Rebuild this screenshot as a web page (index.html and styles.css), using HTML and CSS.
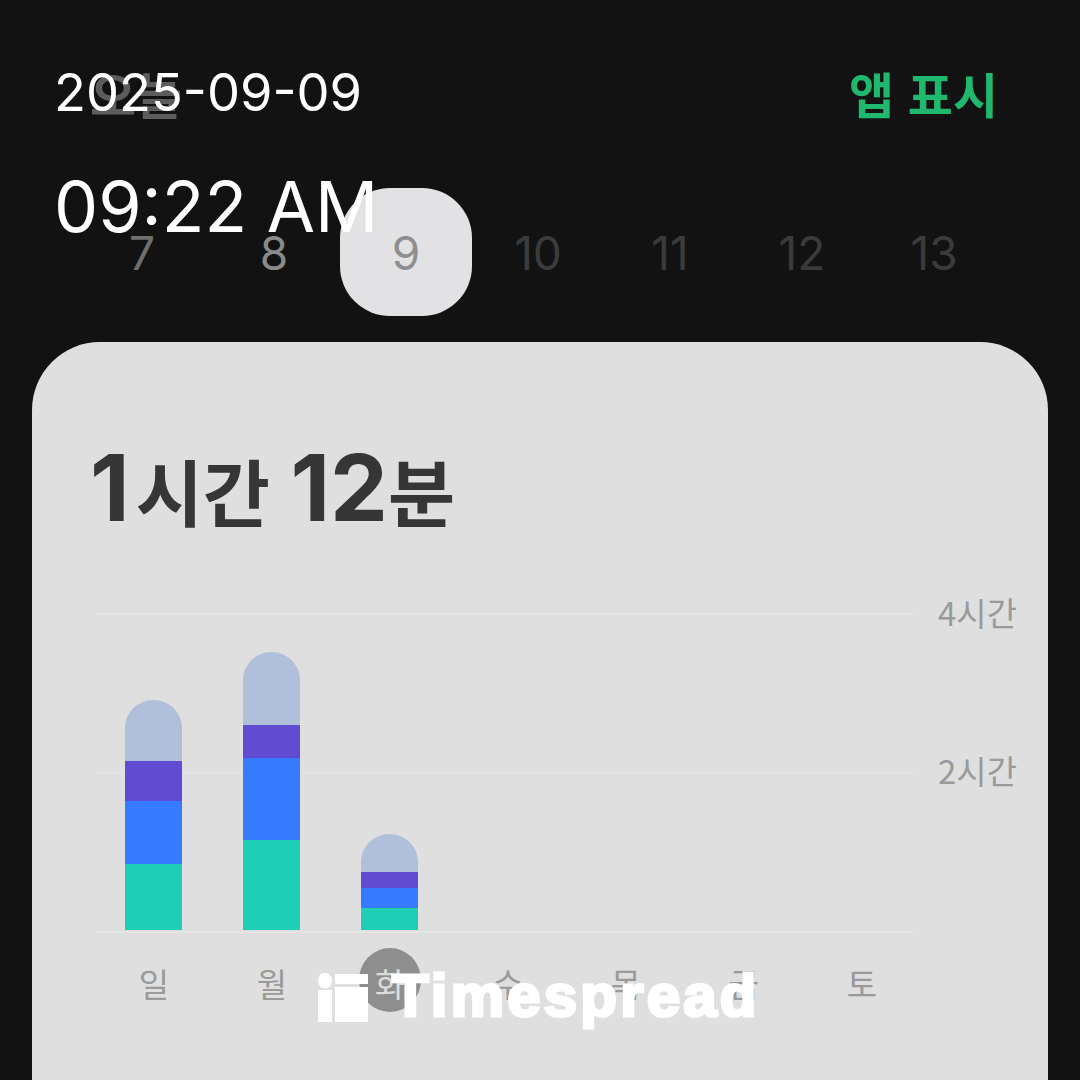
FILE: index.html
```html
<!doctype html>
<html lang="ko">
<head>
    <meta charset="UTF-8">
    <title>Screen time</title>
    <link rel="stylesheet" href="styles.css">
</head>
<body>
<div class="stamp">
    <p class="stamp-date">2025-09-09</p>
    <p class="stamp-time">09:22 AM</p>
</div>

<div class="top">
    <h2 class="top-title">오늘</h2>
    <a class="top-link">앱 표시</a>
</div>

<div class="week">
    <span class="date date-past">7</span>
    <span class="date date-near">8</span>
    <span class="date date-active">9</span>
    <span class="date">10</span>
    <span class="date">11</span>
    <span class="date">12</span>
    <span class="date">13</span>
</div>

<div class="card">
    <h1 class="total"><b class="total-first">1</b>시간 <b>12</b>분</h1>

    <div class="chart">
        <div class="plot">
            <div class="bars">
                <div class="bar">
                    <i class="seg seg-top h-61"></i>
                    <i class="seg seg-purple h-40"></i>
                    <i class="seg seg-blue h-63"></i>
                    <i class="seg seg-teal h-66"></i>
                </div>
                <div class="bar">
                    <i class="seg seg-top h-73"></i>
                    <i class="seg seg-purple h-33"></i>
                    <i class="seg seg-blue h-82"></i>
                    <i class="seg seg-teal h-90"></i>
                </div>
                <div class="bar">
                    <i class="seg seg-top h-38"></i>
                    <i class="seg seg-purple h-16"></i>
                    <i class="seg seg-blue h-20"></i>
                    <i class="seg seg-teal h-22"></i>
                </div>
            </div>
            <span class="axis axis-4">4시간</span>
            <span class="axis axis-2">2시간</span>
        </div>
        <div class="days">
            <span class="day">일</span>
            <span class="day">월</span>
            <span class="day day-today">화</span>
            <span class="day">수</span>
            <span class="day">목</span>
            <span class="day">금</span>
            <span class="day">토</span>
        </div>
    </div>
</div>

<div class="logo">
    <svg class="logo-mark" width="50" height="49" viewBox="0 0 50 49">
        <ellipse cx="7" cy="7.5" rx="7" ry="8" fill="#fff"/>
        <rect x="0" y="17" width="14" height="32" fill="#fff"/>
        <rect x="17" y="1" width="33" height="10" fill="#fff"/>
        <rect x="17" y="14" width="33" height="35" fill="#fff"/>
    </svg>
    <span class="logo-text">Timespread</span>
</div>
</body>
</html>
```

FILE: styles.css
```css
*{
    box-sizing: border-box;
}
html, body{
    height: 100%;
}
body{
    margin: 0;
    background: #121212;
    font-family: Inter, "Noto Sans CJK KR", sans-serif;
    overflow: hidden;
    position: relative;
}
.stamp{
    position: absolute;
    left: 54px;
    top: 62px;
    z-index: 3;
    color: #fff;
    font-family: Inter, sans-serif;
}
.stamp p{
    margin: 0;
    line-height: 1;
}
.stamp-date{
    font-size: 52.4px;
    height: 110px;
    padding-top: 4px;
}
.stamp-time{
    font-size: 70px;
}
.top{
    display: flex;
    justify-content: space-between;
    align-items: flex-start;
    padding: 65px 82px 0 90px;
    height: 188px;
}
.top-title{
    margin: 0;
    font-size: 50px;
    line-height: 56px;
    font-weight: 700;
    color: #5c5c5c;
    font-family: "Noto Sans CJK KR", sans-serif;
}
.top-link{
    font-size: 49px;
    line-height: 56px;
    font-weight: 700;
    color: #1fb86e;
    font-family: "Noto Sans CJK KR", sans-serif;
}
.week{
    display: grid;
    grid-template-columns: repeat(7, 132px);
    padding-left: 76px;
    height: 128px;
}
.date{
    display: flex;
    align-items: center;
    justify-content: center;
    font-size: 46px;
    padding-top: 2px;
    color: #3b3b3b;
}
.date-past{
    color: #6f6f6f;
}
.date-near{
    color: #8a8a8a;
}
.date-active{
    color: #8f8f8f;
    background: #e2e2e4;
    border-radius: 50px;
}
.card{
    margin: 26px 32px 0;
    height: 738px;
    background: #dfdfdf;
    border-radius: 68px 68px 0 0;
    padding: 96px 32px 0 58px;
}
.total{
    margin: 0;
    font-size: 73px;
    line-height: 100px;
    font-weight: 700;
    color: #363636;
    font-family: "Noto Sans CJK KR", sans-serif;
}
.total b{
    font-family: Inter, sans-serif;
    font-size: 92px;
    font-weight: 700;
}
.total-first{
    margin-right: 6px;
}
.chart{
    margin-top: 74px;
    margin-left: 6px;
}
.plot{
    position: relative;
    height: 320px;
    border-top: 2px solid #e3e3e3;
    border-bottom: 2px solid #e3e3e3;
    margin-right: 102px;
    background: linear-gradient(#e3e3e3, #e3e3e3) 0 157px / 100% 2px no-repeat;
}
.bars{
    display: flex;
    gap: 61px;
    align-items: flex-end;
    height: 100%;
    padding: 0 0 0 29px;
}
.bar{
    width: 57px;
    display: flex;
    flex-direction: column;
    margin-bottom: 1px;
}
.seg{
    display: block;
}
.seg-top{
    background: #b0c0db;
    border-radius: 28px 28px 0 0;
}
.seg-purple{
    background: #614bd0;
}
.seg-blue{
    background: #367bff;
}
.seg-teal{
    background: #1ecfb6;
}
.h-16{ height: 16px; }
.h-20{ height: 20px; }
.h-22{ height: 22px; }
.h-33{ height: 33px; }
.h-38{ height: 38px; }
.h-40{ height: 40px; }
.h-61{ height: 61px; }
.h-63{ height: 63px; }
.h-66{ height: 66px; }
.h-73{ height: 73px; }
.h-82{ height: 82px; }
.h-90{ height: 90px; }
.axis{
    position: absolute;
    left: 842px;
    font-size: 33px;
    line-height: 36px;
    white-space: nowrap;
    color: #9a9a9a;
    font-family: "Noto Sans CJK KR", sans-serif;
}
.axis-4{
    top: -21px;
}
.axis-2{
    top: 137px;
}
.days{
    display: grid;
    grid-template-columns: repeat(7, 118px);
    margin-left: -1px;
    margin-top: 15px;
}
.day{
    justify-self: center;
    width: 62px;
    height: 64px;
    padding-top: 5px;
    border-radius: 50%;
    display: flex;
    align-items: center;
    justify-content: center;
    font-size: 33px;
    color: #9a9a9a;
    font-family: "Noto Sans CJK KR", sans-serif;
}
.day-today{
    background: #8e8e8e;
    color: #dcdcdc;
}
.logo{
    position: absolute;
    left: 318px;
    top: 973px;
    display: flex;
    align-items: flex-start;
    gap: 24px;
    color: #fff;
}
.logo-text{
    font-size: 60px;
    line-height: 46px;
    font-weight: 700;
    font-family: "Liberation Sans", sans-serif;
    letter-spacing: 3.2px;
    -webkit-text-stroke: 3px #fff;
}
```
